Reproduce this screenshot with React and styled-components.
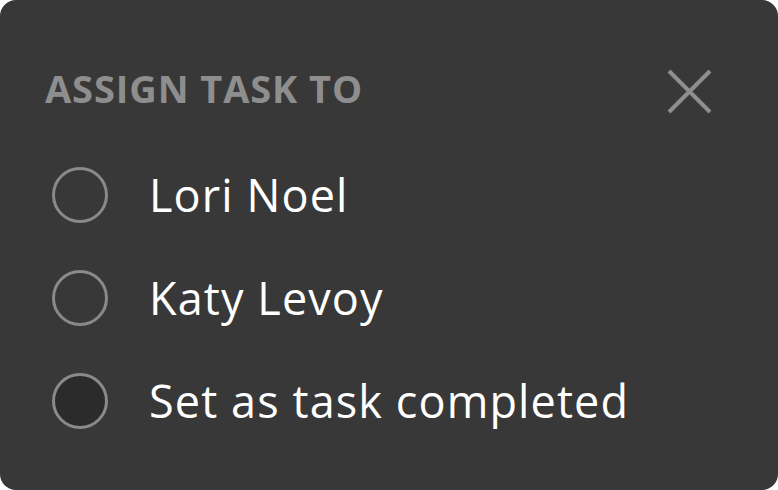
import styled, { createGlobalStyle } from "styled-components";

const colors = {
  card: "#383838",
  muted: "#8e8e8e",
  ring: "#8a8a8a",
  dark: "#2b2b2b",
  text: "#ffffff",
};

const GlobalStyle = createGlobalStyle`
  html, body {
    margin: 0;
    padding: 0;
    background: #ffffff;
  }
  body {
    font-family: "Open Sans", "Liberation Sans", sans-serif;
  }
`;

const Card = styled.div`
  box-sizing: border-box;
  width: 778px;
  height: 490px;
  background: ${colors.card};
  border-radius: 16px;
  padding: 71px 66px 0 45px;
  display: flex;
  flex-direction: column;
`;

const Header = styled.div`
  display: flex;
  justify-content: space-between;
  align-items: center;
  height: 40px;
`;

const Title = styled.h1`
  margin: -6px 0 0;
  font-size: 38px;
  line-height: 40px;
  font-weight: 700;
  color: ${colors.muted};
  letter-spacing: 0.9px;
`;

const CloseButton = styled.button`
  background: none;
  border: none;
  padding: 0;
  width: 45px;
  height: 45px;
  cursor: pointer;
  display: flex;
`;

const Options = styled.ul`
  list-style: none;
  margin: 32px 0 0 7px;
  padding: 0;
  display: flex;
  flex-direction: column;
`;

const Option = styled.li`
  display: flex;
  align-items: center;
  gap: 41px;
  height: 103px;
`;

const Radio = styled.span`
  box-sizing: border-box;
  width: 56px;
  height: 56px;
  border-radius: 50%;
  border: 3px solid ${colors.ring};
  background: ${(p) => (p.$filled ? colors.dark : "transparent")};
  flex-shrink: 0;
`;

const Label = styled.span`
  font-size: 45px;
  line-height: 56px;
  color: ${colors.text};
  font-weight: 400;
  letter-spacing: 1.1px;
`;

const CloseIcon = () => (
  <svg width="45" height="45" viewBox="0 0 45 45">
    <path
      d="M2 2L43 43M43 2L2 43"
      stroke={colors.muted}
      strokeWidth="4"
      fill="none"
    />
  </svg>
);

const options = [
  { label: "Lori Noel" },
  { label: "Katy Levoy" },
  { label: "Set as task completed", filled: true },
];

export default function App() {
  return (
    <>
      <GlobalStyle />
      <Card>
        <Header>
          <Title>ASSIGN TASK TO</Title>
          <CloseButton aria-label="Close">
            <CloseIcon />
          </CloseButton>
        </Header>
        <Options>
          {options.map((o) => (
            <Option key={o.label}>
              <Radio $filled={o.filled} />
              <Label>{o.label}</Label>
            </Option>
          ))}
        </Options>
      </Card>
    </>
  );
}
